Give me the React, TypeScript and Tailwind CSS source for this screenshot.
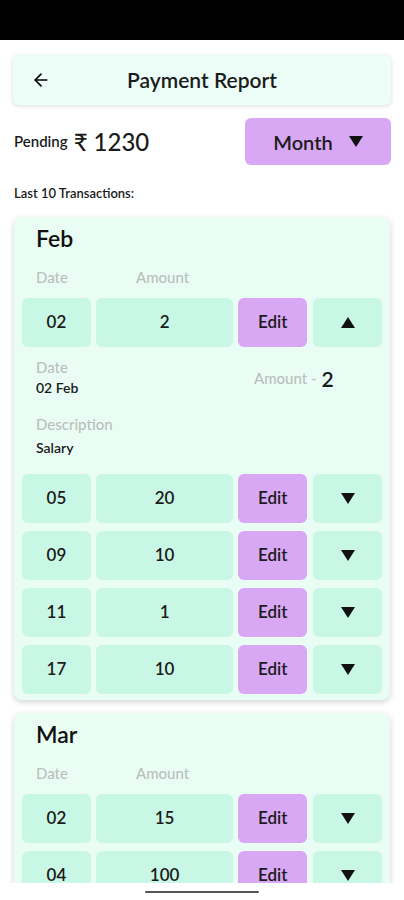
import { ArrowLeft } from 'lucide-react';

type Txn = {
  day: string;
  amount: string;
  open?: boolean;
  description?: string;
};

type MonthGroup = {
  month: string;
  items: Txn[];
};

const groups: MonthGroup[] = [
  {
    month: 'Feb',
    items: [
      { day: '02', amount: '2', open: true, description: 'Salary' },
      { day: '05', amount: '20' },
      { day: '09', amount: '10' },
      { day: '11', amount: '1' },
      { day: '17', amount: '10' },
    ],
  },
  {
    month: 'Mar',
    items: [
      { day: '02', amount: '15' },
      { day: '04', amount: '100' },
      { day: '08', amount: '50' },
    ],
  },
];

function Triangle({ up = false }: { up?: boolean }) {
  return (
    <svg width="14" height="11" viewBox="0 0 14 11" className="block">
      {up ? (
        <polygon points="7,0 14,11 0,11" fill="#111" />
      ) : (
        <polygon points="0,0 14,0 7,11" fill="#111" />
      )}
    </svg>
  );
}

function TxnRow({ item, month }: { item: Txn; month: string }) {
  return (
    <div>
      <div className="flex h-[49px] text-[17px] font-semibold text-[#1b1b1b]">
        <div className="flex w-[69px] items-center justify-center rounded-md bg-[#c9f7e5]">
          {item.day}
        </div>
        <div className="ml-[5px] flex w-[138px] items-center justify-center rounded-md bg-[#c9f7e5]">
          {item.amount}
        </div>
        <button className="ml-[5px] flex w-[69px] items-center justify-center rounded-md bg-[#d8a8f4] font-semibold">
          Edit
        </button>
        <div className="ml-[6px] flex w-[69px] items-center justify-center rounded-md bg-[#c9f7e5]">
          <Triangle up={item.open} />
        </div>
      </div>

      {item.open && (
        <div className="px-[14px] pb-[10px]">
          <div className="flex">
            <div className="w-[218px]">
              <p className="mt-[12px] text-[15px] leading-4 font-medium text-[#b9bfbc]">
                Date
              </p>
              <p className="mt-[5px] text-[14px] leading-4 font-semibold text-[#1b1b1b]">
                {item.day} {month}
              </p>
            </div>
            <p className="mt-[15px] flex items-center gap-[5px] text-[15px] font-medium text-[#b9bfbc]">
              Amount -
              <span className="text-[21px] font-semibold text-[#1b1b1b]">
                {item.amount}
              </span>
            </p>
          </div>
          <p className="mt-[20px] text-[15px] leading-4 font-medium text-[#b9bfbc]">
            Description
          </p>
          <p className="mt-[8px] text-[14px] leading-4 font-semibold text-[#1b1b1b]">
            {item.description}
          </p>
        </div>
      )}
    </div>
  );
}

function MonthCard({ group }: { group: MonthGroup }) {
  return (
    <section className="mx-[1px] rounded-lg bg-[#e9fdf5] px-[8px] pt-[7px] pb-[6px] shadow-[0_2px_6px_rgba(0,0,0,0.18)]">
      <h2 className="pl-[14px] text-[23px] leading-7 font-semibold text-[#111]">
        {group.month}
      </h2>
      <div className="mt-[16px] flex pl-[14px] text-[15px] leading-[18px] font-medium text-[#b9bfbc]">
        <span className="w-[100px]">Date</span>
        <span>Amount</span>
      </div>
      <div className="mt-[12px] flex flex-col gap-[8px]">
        {group.items.map(item => (
          <TxnRow key={group.month + item.day} item={item} month={group.month} />
        ))}
      </div>
    </section>
  );
}

export default function App() {
  return (
    <div
      className="flex h-[900px] w-[404px] flex-col overflow-hidden bg-white"
      style={{ fontFamily: 'Lato, "Noto Sans", sans-serif' }}
    >
      <div className="h-[40px] shrink-0 bg-black" />

      <main className="h-[843px] shrink-0 overflow-hidden px-[13px]">
        {/* 헤더 */}
        <header className="relative mt-[15px] flex h-[50px] items-center justify-center rounded-md bg-[#ecfef7] shadow-[0_1px_4px_rgba(0,0,0,0.15)]">
          <ArrowLeft className="absolute left-[18px] h-[20px] w-[20px]" strokeWidth={2} />
          <h1 className="text-[21px] font-semibold text-[#1b1b1b]">Payment Report</h1>
        </header>

        {/* 잔액 + 월 선택 */}
        <div className="mt-[13px] flex h-[47px] items-center justify-between">
          <p className="flex items-center gap-[6px] pl-[1px] text-[#1b1b1b]">
            <span className="text-[15px] font-semibold">Pending</span>
            <span className="text-[24px] font-medium">₹ 1230</span>
          </p>
          <button className="flex h-[47px] w-[146px] items-center justify-center gap-[16px] rounded-md bg-[#d8a8f4] text-[20px] font-semibold text-[#1b1b1b]">
            Month
            <Triangle />
          </button>
        </div>

        <p className="mt-[19px] pl-[1px] text-[13px] font-semibold text-[#1b1b1b]">
          Last 10 Transactions:
        </p>

        <div className="mt-[13px] flex flex-col gap-[13px]">
          {groups.map(g => (
            <MonthCard key={g.month} group={g} />
          ))}
        </div>
      </main>

      <div className="flex h-[17px] shrink-0 items-center justify-center bg-white">
        <div className="h-[2px] w-[114px] rounded-full bg-[#555]" />
      </div>
    </div>
  );
}
